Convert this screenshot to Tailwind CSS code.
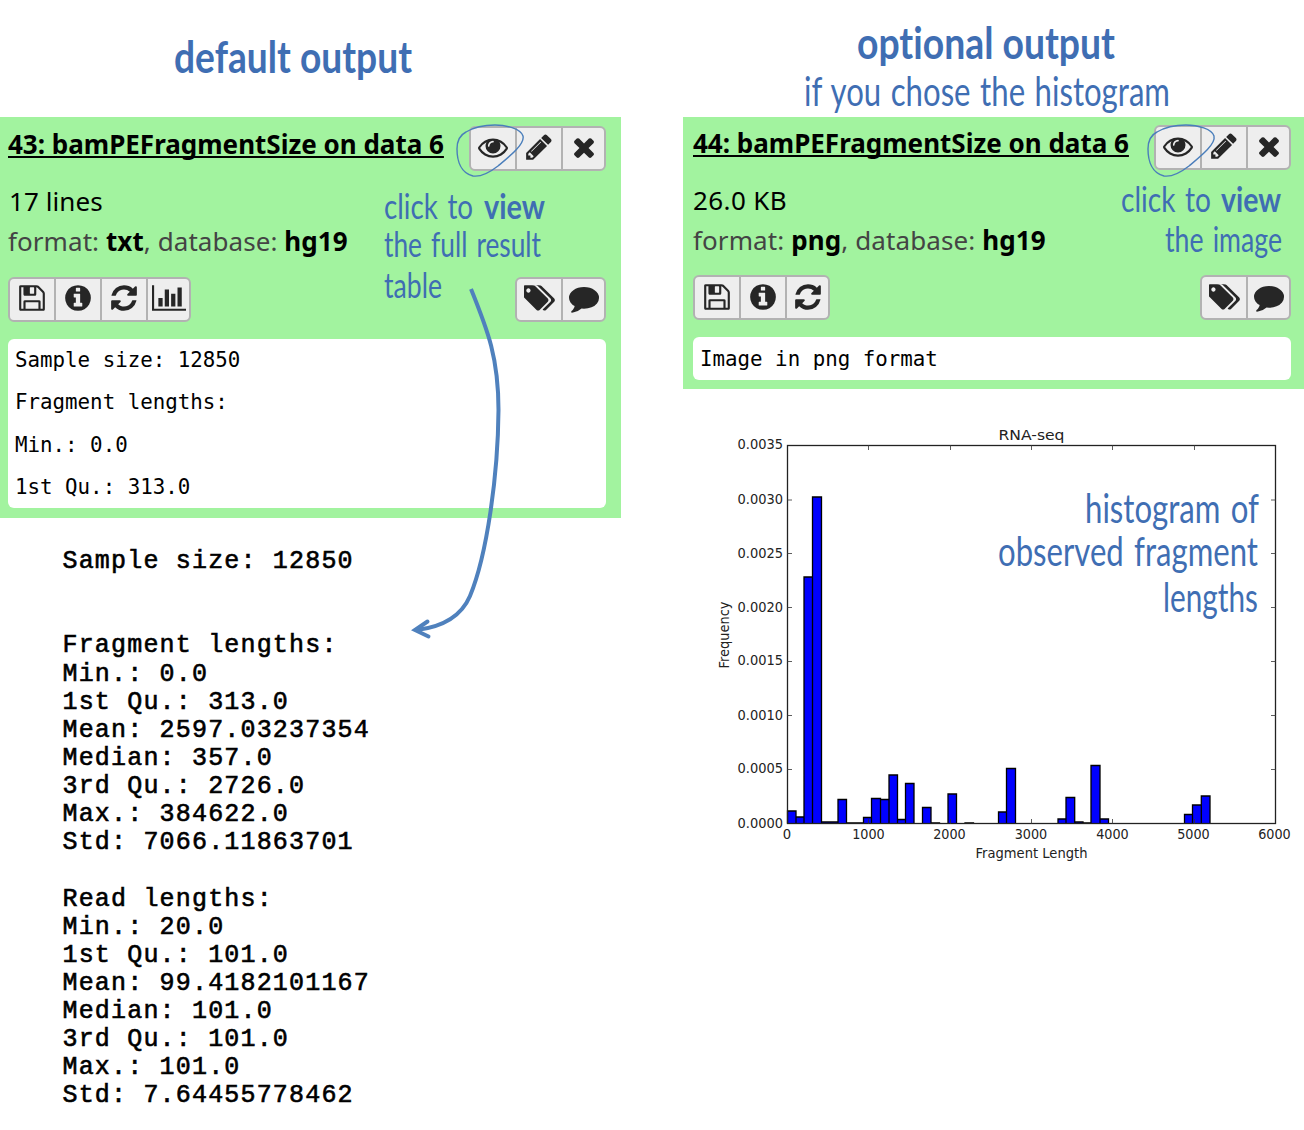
<!DOCTYPE html>
<html lang="en">
<head>
<meta charset="utf-8">
<title>bamPEFragmentSize output</title>
<script src="https://cdn.jsdelivr.net/npm/@tailwindcss/browser@4"></script>
</head>
<body class="bg-white text-black overflow-hidden">
<svg class="hidden">
  <defs>
    <symbol id="save" viewBox="0 0 1792 1792"><path d="M512 1536h768v-384h-768v384zm896 0h128v-896q0-14-10-38.5t-20-34.5l-281-281q-10-10-34-20t-39-10v416q0 40-28 68t-68 28h-576q-40 0-68-28t-28-68v-416h-128v1280h128v-416q0-40 28-68t68-28h832q40 0 68 28t28 68v416zm-384-928v-320q0-13-9.5-22.5t-22.5-9.5h-192q-13 0-22.5 9.5t-9.5 22.5v320q0 13 9.5 22.5t22.5 9.5h192q13 0 22.5-9.5t9.5-22.5zm640 32v928q0 40-28 68t-68 28h-1344q-40 0-68-28t-28-68v-1344q0-40 28-68t68-28h928q40 0 88 20t76 48l280 280q28 28 48 76t20 88z"/></symbol>
    <symbol id="info" viewBox="0 0 1792 1792"><path d="M1152 1376v-160q0-14-9-23t-23-9h-96v-512q0-14-9-23t-23-9h-320q-14 0-23 9t-9 23v160q0 14 9 23t23 9h96v320h-96q-14 0-23 9t-9 23v160q0 14 9 23t23 9h448q14 0 23-9t9-23zm-128-896v-160q0-14-9-23t-23-9h-192q-14 0-23 9t-9 23v160q0 14 9 23t23 9h192q14 0 23-9t9-23zm640 416q0 209-103 385.5t-279.5 279.5-385.5 103-385.5-103-279.5-279.5-103-385.5 103-385.5 279.5-279.5 385.5-103 385.5 103 279.5 279.5 103 385.5z"/></symbol>
    <symbol id="refresh" viewBox="0 0 1792 1792"><path d="M1639 1056q0 5-1 7-64 268-268 434.5t-478 166.5q-146 0-282.5-55t-243.5-157l-129 129q-19 19-45 19t-45-19-19-45v-448q0-26 19-45t45-19h448q26 0 45 19t19 45-19 45l-137 137q71 66 161 102t187 36q134 0 250-65t186-179q11-17 53-117 8-23 30-23h192q13 0 22.5 9.5t9.5 22.5zm25-800v448q0 26-19 45t-45 19h-448q-26 0-45-19t-19-45 19-45l138-138q-148-137-349-137-134 0-250 65t-186 179q-11 17-53 117-8 23-30 23h-199q-13 0-22.5-9.5t-9.5-22.5v-7q65-268 270-434.5t480-166.5q146 0 284 55.5t245 156.5l130-129q19-19 45-19t45 19 19 45z"/></symbol>
    <symbol id="chart" viewBox="0 0 2048 1792"><path d="M640 896v512h-256v-512h256zm384-512v1024h-256v-1024h256zm1024 1152v128h-2048v-1536h128v1408h1920zm-640-896v768h-256v-768h256zm384-384v1152h-256v-1152h256z"/></symbol>
    <symbol id="eye" viewBox="0 0 1792 1792"><path d="M1664 960q-152-236-381-353 61 104 61 225 0 185-131.5 316.5t-316.5 131.5-316.5-131.5-131.5-316.5q0-121 61-225-229 117-381 353 133 205 333.5 326.5t434.5 121.5 434.5-121.5 333.5-326.5zm-720-384q0-20-14-34t-34-14q-125 0-214.5 89.5t-89.5 214.5q0 20 14 34t34 14 34-14 14-34q0-86 61-147t147-61q20 0 34-14t14-34zm848 384q0 34-20 69-140 230-376.5 368.5t-499.5 138.5-499.5-139-376.5-368q-20-35-20-69t20-69q140-229 376.5-368t499.5-139 499.5 139 376.5 368q20 35 20 69z"/></symbol>
    <symbol id="pencil" viewBox="0 0 1792 1792"><path d="M491 1536l91-91-235-235-91 91v107h128v128h107zm523-928q0-22-22-22-10 0-17 7l-542 542q-7 7-7 17 0 22 22 22 10 0 17-7l542-542q7-7 7-17zm-54-192l416 416-832 832h-416v-416zm683 96q0 53-37 90l-166 166-416-416 166-165q36-38 90-38 53 0 91 38l235 234q37 39 37 91z"/></symbol>
    <symbol id="times" viewBox="0 0 1792 1792"><path d="M1490 1322q0 40-28 68l-136 136q-28 28-68 28t-68-28l-294-294-294 294q-28 28-68 28t-68-28l-136-136q-28-28-28-68t28-68l294-294-294-294q-28-28-28-68t28-68l136-136q28-28 68-28t68 28l294 294 294-294q28-28 68-28t68 28l136 136q28 28 28 68t-28 68l-294 294 294 294q28 28 28 68z"/></symbol>
    <symbol id="tags" viewBox="0 0 1835 1792"><path d="M384 448q0-53-37.5-90.5t-90.5-37.5-90.5 37.5-37.5 90.5 37.5 90.5 90.5 37.5 90.5-37.5 37.5-90.5zm1067 576q0 53-37 90l-491 492q-39 37-91 37-53 0-90-37l-715-716q-38-37-64.5-101t-26.5-117v-416q0-52 38-90t90-38h416q53 0 117 26.5t102 64.5l715 714q37 39 37 91zm384 0q0 53-37 90l-491 492q-39 37-91 37-36 0-59-14t-53-45l470-470q37-37 37-90 0-52-37-91l-715-714q-38-38-102-64.5t-117-26.5h224q53 0 117 26.5t102 64.5l715 714q37 39 37 91z"/></symbol>
    <symbol id="comment" viewBox="0 0 1792 1792"><path d="M1792 896q0 174-120 321.5t-326 233-450 85.5q-70 0-145-8-198 175-460 225-49 14-114 22-17 2-30.5-9t-17.5-29v-1q-3-4-.5-12t2-10 4.5-9.5l6-9 7-8.5 8-9q7-8 31-34.5t34.5-38 31-39.5 32.5-51 27-59 26-76q-157-89-247.5-220t-90.5-281q0-130 71-248.5t191-204.5 286-136.5 348-50.5 348 50.5 286 136.5 191 204.5 71 248.5z"/></symbol>
  </defs>
</svg>

<main class="relative flex h-[1130px] w-[1304px] gap-[62px] font-['Noto_Sans',sans-serif]">
  <!-- Text result -->
  <section class="w-[621px] shrink-0">
    <header class="h-[117px] text-[#3f6eb3]">
      <svg class="block" width="620" height="117" font-family="Lato, sans-serif" fill="currentColor">
        <text x="174" y="73" font-size="43" font-weight="700" textLength="238" lengthAdjust="spacingAndGlyphs">default output</text>
      </svg>
    </header>
    <article class="flex h-[401px] flex-col bg-[#a2f39f] pl-2 pr-[15px]">
      <div class="flex justify-between pt-[9px]">
        <h2 class="mt-px h-[34px] whitespace-nowrap text-[26px] leading-[34px] font-bold underline decoration-[1.5px] underline-offset-2 [text-decoration-skip-ink:none]">43: bamPEFragmentSize on data 6</h2>
        <div class="flex h-[45px] w-[137px] rounded-md border-2 border-[#b2b2b2] bg-[#eee] text-[#262626] *:flex *:w-[46px] *:shrink-0 *:items-center *:justify-center *:pb-[3px] *:last:w-[41px]">
          <button class="border-r-2 border-[#b2b2b2]"><svg class="size-[30px] fill-current"><use href="#eye"/></svg></button>
          <button class="border-r-2 border-[#b2b2b2]"><svg class="size-[30px] fill-current"><use href="#pencil"/></svg></button>
          <button><svg class="size-[30px] fill-current"><use href="#times"/></svg></button>
        </div>
      </div>
      <div class="mt-[10px] text-[26px] leading-10 tracking-[0.07px] whitespace-nowrap">
        <p class="pl-px">17 lines</p>
        <p class="text-[#444]">format: <b class="text-black">txt</b>, database: <b class="text-black">hg19</b></p>
      </div>
      <div class="mt-4 flex justify-between">
        <div class="flex h-[45px] w-[183px] rounded-md border-2 border-[#b2b2b2] bg-[#eee] text-[#262626] *:flex *:w-[46px] *:shrink-0 *:items-center *:justify-center *:pb-[3px] *:last:w-[41px]">
          <button class="border-r-2 border-[#b2b2b2]"><svg class="size-[30px] fill-current"><use href="#save"/></svg></button>
          <button class="border-r-2 border-[#b2b2b2]"><svg class="size-[30px] fill-current"><use href="#info"/></svg></button>
          <button class="border-r-2 border-[#b2b2b2]"><svg class="size-[30px] fill-current"><use href="#refresh"/></svg></button>
          <button><svg class="h-[30px] w-[34px] shrink-0 fill-current"><use href="#chart"/></svg></button>
        </div>
        <div class="flex h-[45px] w-[91px] rounded-md border-2 border-[#b2b2b2] bg-[#eee] text-[#262626] *:flex *:w-[46px] *:shrink-0 *:items-center *:justify-center *:pb-[3px] *:last:w-[41px]">
          <button class="border-r-2 border-[#b2b2b2]"><svg class="h-[30px] w-[31px] fill-current"><use href="#tags"/></svg></button>
          <button><svg class="size-[30px] fill-current"><use href="#comment"/></svg></button>
        </div>
      </div>
      <pre class="mt-[17px] h-[169px] rounded-md bg-white pl-[7px] font-['DejaVu_Sans_Mono',monospace] text-[20.8px] leading-[42.4px]">Sample size: 12850
Fragment lengths:
Min.: 0.0
1st Qu.: 313.0</pre>
    </article>
    <pre class="mt-[30px] pl-[62.5px] font-['Liberation_Mono',monospace] text-[25px] leading-[28.12px] tracking-[1.18px] [-webkit-text-stroke:0.6px_black]">Sample size: 12850


Fragment lengths:
Min.: 0.0
1st Qu.: 313.0
Mean: 2597.03237354
Median: 357.0
3rd Qu.: 2726.0
Max.: 384622.0
Std: 7066.11863701

Read lengths:
Min.: 20.0
1st Qu.: 101.0
Mean: 99.4182101167
Median: 101.0
3rd Qu.: 101.0
Max.: 101.0
Std: 7.64455778462</pre>
  </section>

  <!-- Image result -->
  <section class="w-[621px] shrink-0">
    <header class="h-[117px] text-[#3f6eb3]">
      <svg class="block overflow-visible [font-variant-ligatures:none]" width="621" height="117" font-family="Lato, sans-serif" fill="currentColor">
        <text x="174" y="59" font-size="43" font-weight="700" textLength="258" lengthAdjust="spacingAndGlyphs">optional output</text>
        <text x="121" y="106" font-size="40" font-weight="400" word-spacing="2" textLength="366" lengthAdjust="spacingAndGlyphs">if you chose the histogram</text>
      </svg>
    </header>
    <article class="flex h-[272px] flex-col bg-[#a2f39f] pl-[10px] pr-[13px]">
      <div class="flex justify-between pt-2">
        <h2 class="mt-px h-[34px] whitespace-nowrap text-[26px] leading-[34px] font-bold underline decoration-[1.5px] underline-offset-2 [text-decoration-skip-ink:none]">44: bamPEFragmentSize on data 6</h2>
        <div class="flex h-[45px] w-[137px] rounded-md border-2 border-[#b2b2b2] bg-[#eee] text-[#262626] *:flex *:w-[46px] *:shrink-0 *:items-center *:justify-center *:pb-[3px] *:last:w-[41px]">
          <button class="border-r-2 border-[#b2b2b2]"><svg class="size-[30px] fill-current"><use href="#eye"/></svg></button>
          <button class="border-r-2 border-[#b2b2b2]"><svg class="size-[30px] fill-current"><use href="#pencil"/></svg></button>
          <button><svg class="size-[30px] fill-current"><use href="#times"/></svg></button>
        </div>
      </div>
      <div class="mt-[10px] text-[26px] leading-10 tracking-[0.1px] whitespace-nowrap">
        <p class="tracking-[0.4px]">26.0 KB</p>
        <p class="text-[#444]">format: <b class="text-black">png</b>, database: <b class="text-black">hg19</b></p>
      </div>
      <div class="mt-[15px] flex justify-between">
        <div class="flex h-[45px] w-[137px] rounded-md border-2 border-[#b2b2b2] bg-[#eee] text-[#262626] *:flex *:w-[46px] *:shrink-0 *:items-center *:justify-center *:pb-[2px] *:last:w-[41px]">
          <button class="border-r-2 border-[#b2b2b2]"><svg class="size-[30px] fill-current"><use href="#save"/></svg></button>
          <button class="border-r-2 border-[#b2b2b2]"><svg class="size-[30px] fill-current"><use href="#info"/></svg></button>
          <button><svg class="size-[30px] fill-current"><use href="#refresh"/></svg></button>
        </div>
        <div class="flex h-[45px] w-[91px] rounded-md border-2 border-[#b2b2b2] bg-[#eee] text-[#262626] *:flex *:w-[46px] *:shrink-0 *:items-center *:justify-center *:pb-[2px] *:last:w-[41px]">
          <button class="border-r-2 border-[#b2b2b2]"><svg class="h-[30px] w-[31px] fill-current"><use href="#tags"/></svg></button>
          <button><svg class="size-[30px] fill-current"><use href="#comment"/></svg></button>
        </div>
      </div>
      <pre class="mt-[17px] h-[43px] rounded-md bg-white pl-[7px] font-['DejaVu_Sans_Mono',monospace] text-[20.8px] leading-[44px]">Image in png format</pre>
    </article>

    <!-- Histogram; coordinates are page pixels -->
    <svg class="block" width="621" height="491" viewBox="683 389 621 491" font-family="DejaVu Sans, sans-serif" font-size="12.6" fill="#222">
      <path fill="#00f" stroke="#000" stroke-width="1.3" d="M787.5 823.5V811H796V823.5M796 823.5V817H804V823.5M804 823.5V577H812.5V823.5M812.5 823.5V497H821.5V823.5M821.5 823.5V822H838V823.5M838 823.5V799.5H846.5V823.5M846.5 823.5V823H863V823.5M863.5 823.5V817.5H871.5V823.5M871.5 823.5V798.5H880.5V823.5M880.5 823.5V799.5H889V823.5M889 823.5V775H897.5V823.5M897.5 823.5V819.5H905.5V823.5M905.5 823.5V783.5H914V823.5M922.5 823.5V807.5H931V823.5M931 823.5V823H939.5V823.5M948 823.5V794H956.5V823.5M965 823.5V823H973.5V823.5M998.5 823.5V812H1006.5V823.5M1006.5 823.5V768.5H1015.5V823.5M1058 823.5V819H1066V823.5M1066 823.5V797.5H1074.7V823.5M1075 823.5V822H1083V823.5M1083 823.5V823H1091V823.5M1091 823.5V765.5H1100V823.5M1100 823.5V819H1108.5V823.5M1184.5 823.5V814.5H1192.5V823.5M1192.5 823.5V805H1201.3V823.5M1201.3 823.5V796H1210V823.5"/>
      <rect x="787.5" y="445.5" width="488" height="378" fill="none" stroke="#222" stroke-width="1.3"/>
      <path fill="none" stroke="#333" stroke-width="0.8" d="M868.5 445v5M950.5 445v5M1031.5 445v5M1112.5 445v5M1194.5 445v5M868.5 824v-5M950.5 824v-5M1031.5 824v-5M1112.5 824v-5M1194.5 824v-5M787 500h5M787 553.5h5M787 607.5h5M787 661.5h5M787 715.5h5M787 769.5h5M1276 500h-5M1276 553.5h-5M1276 607.5h-5M1276 661.5h-5M1276 715.5h-5M1276 769.5h-5"/>
      <g text-anchor="end" font-size="13.2">
        <text x="783" y="449" textLength="45.500" lengthAdjust="spacingAndGlyphs">0.0035</text>
        <text x="783" y="504" textLength="45.500" lengthAdjust="spacingAndGlyphs">0.0030</text>
        <text x="783" y="557.5" textLength="45.500" lengthAdjust="spacingAndGlyphs">0.0025</text>
        <text x="783" y="612" textLength="45.500" lengthAdjust="spacingAndGlyphs">0.0020</text>
        <text x="783" y="665" textLength="45.500" lengthAdjust="spacingAndGlyphs">0.0015</text>
        <text x="783" y="719.5" textLength="45.500" lengthAdjust="spacingAndGlyphs">0.0010</text>
        <text x="783" y="773" textLength="45.500" lengthAdjust="spacingAndGlyphs">0.0005</text>
        <text x="783" y="827.5" textLength="45.500" lengthAdjust="spacingAndGlyphs">0.0000</text>
      </g>
      <g text-anchor="middle" font-size="13.2">
        <text x="787" y="839">0</text>
        <text x="868.5" y="839" textLength="32.500" lengthAdjust="spacingAndGlyphs">1000</text>
        <text x="949.5" y="839" textLength="32.500" lengthAdjust="spacingAndGlyphs">2000</text>
        <text x="1031" y="839" textLength="32.500" lengthAdjust="spacingAndGlyphs">3000</text>
        <text x="1112.5" y="839" textLength="32.500" lengthAdjust="spacingAndGlyphs">4000</text>
        <text x="1193.5" y="839" textLength="32.500" lengthAdjust="spacingAndGlyphs">5000</text>
        <text x="1274.5" y="839" textLength="32.500" lengthAdjust="spacingAndGlyphs">6000</text>
        <text x="1031.5" y="858" textLength="112" lengthAdjust="spacingAndGlyphs">Fragment Length</text>
        <text x="1031.5" y="440" font-size="14.5" textLength="66" lengthAdjust="spacingAndGlyphs">RNA-seq</text>
        <text transform="translate(729 635) rotate(-90)" textLength="67" lengthAdjust="spacingAndGlyphs">Frequency</text>
      </g>
    </svg>
  </section>

  <!-- Handwritten notes over both results -->
  <svg class="pointer-events-none absolute inset-0 [font-variant-ligatures:none]" width="1304" height="1130" font-family="Lato, sans-serif" font-weight="400" fill="#3f6eb3">
    <g font-size="34" word-spacing="3">
      <text x="384" y="219" textLength="89" lengthAdjust="spacingAndGlyphs">click to</text>
      <text x="484" y="219" font-weight="700" textLength="61" lengthAdjust="spacingAndGlyphs">view</text>
      <text x="384" y="257" textLength="157" lengthAdjust="spacingAndGlyphs">the full result</text>
      <text x="384" y="298" textLength="58" lengthAdjust="spacingAndGlyphs">table</text>
      <text x="1121" y="212" textLength="90" lengthAdjust="spacingAndGlyphs">click to</text>
      <text x="1221" y="212" font-weight="700" textLength="60" lengthAdjust="spacingAndGlyphs">view</text>
      <text x="1165" y="252" textLength="117" lengthAdjust="spacingAndGlyphs">the image</text>
    </g>
    <g font-size="40" word-spacing="3">
      <text x="1085" y="523" textLength="174" lengthAdjust="spacingAndGlyphs">histogram of</text>
      <text x="998" y="566" textLength="260" lengthAdjust="spacingAndGlyphs">observed fragment</text>
      <text x="1163" y="612" textLength="95" lengthAdjust="spacingAndGlyphs">lengths</text>
    </g>
    <g fill="none" stroke="#4a7ebb" stroke-width="1.4">
      <path d="M466 132C476 126 487 125 495 125C507 125 521 129 523 136C525 144 510 156 498 166C489 173 480 177 473 176C461 173 457 161 457 149C457 142 460 135 466 132Z"/>
      <path d="M1157 132C1167 126 1178 125 1186 125C1198 125 1212 129 1214 136C1216 144 1201 156 1189 166C1180 173 1171 177 1164 176C1152 173 1148 161 1148 149C1148 142 1151 135 1157 132Z"/>
    </g>
    <g fill="none" stroke="#4f81bd" stroke-width="4">
      <path d="M471 289C488 331 498.500 358 498.500 410C498 475 487 555 470 596C461 617 441 627 417 630"/>
      <path stroke-linecap="round" d="M427.500 621.500L415 630L428.500 636.500"/>
    </g>
  </svg>
</main>
</body>
</html>
